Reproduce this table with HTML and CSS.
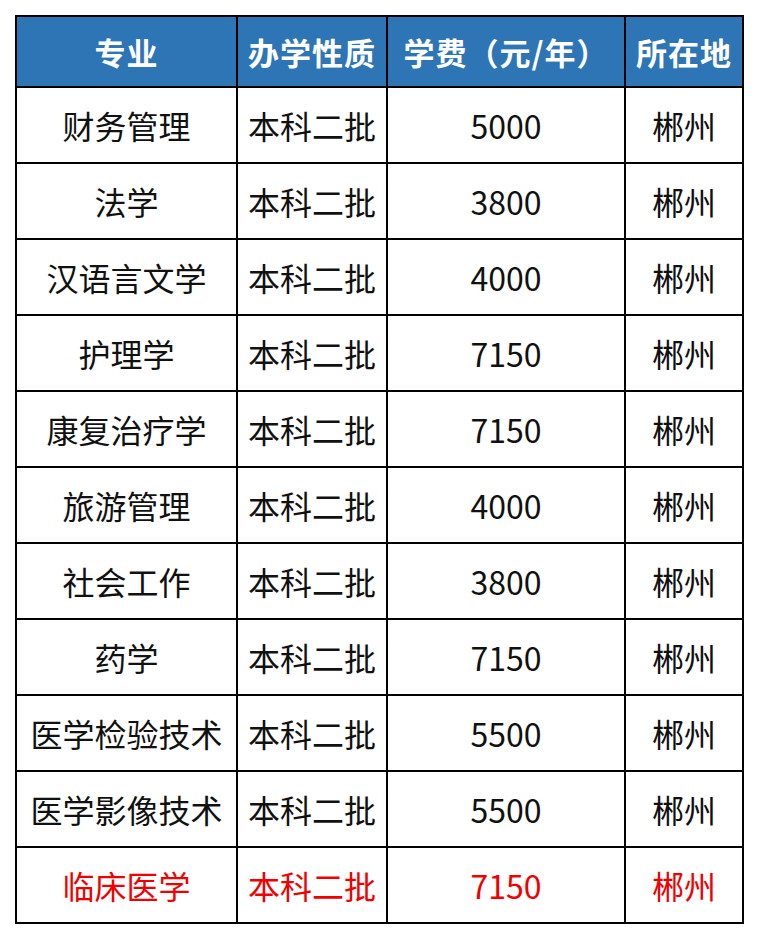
FILE: index.html
```html
<!DOCTYPE html>
<html lang="zh">
<head>
<meta charset="utf-8">
<link rel="stylesheet" href="styles.css">
</head>
<body>
<table class="fees">
  <colgroup>
    <col class="c1"><col class="c2"><col class="c3"><col class="c4">
  </colgroup>
  <thead>
    <tr><th>专业</th><th>办学性质</th><th>学费（元/年）</th><th>所在地</th></tr>
  </thead>
  <tbody>
    <tr><td>财务管理</td><td>本科二批</td><td>5000</td><td>郴州</td></tr>
    <tr><td>法学</td><td>本科二批</td><td>3800</td><td>郴州</td></tr>
    <tr><td>汉语言文学</td><td>本科二批</td><td>4000</td><td>郴州</td></tr>
    <tr><td>护理学</td><td>本科二批</td><td>7150</td><td>郴州</td></tr>
    <tr><td>康复治疗学</td><td>本科二批</td><td>7150</td><td>郴州</td></tr>
    <tr><td>旅游管理</td><td>本科二批</td><td>4000</td><td>郴州</td></tr>
    <tr><td>社会工作</td><td>本科二批</td><td>3800</td><td>郴州</td></tr>
    <tr><td>药学</td><td>本科二批</td><td>7150</td><td>郴州</td></tr>
    <tr><td>医学检验技术</td><td>本科二批</td><td>5500</td><td>郴州</td></tr>
    <tr><td>医学影像技术</td><td>本科二批</td><td>5500</td><td>郴州</td></tr>
    <tr class="hl"><td>临床医学</td><td>本科二批</td><td>7150</td><td>郴州</td></tr>
  </tbody>
</table>
</body>
</html>
```
FILE: styles.css
```css
html, body {
  margin: 0;
  background: #fff;
}
body {
  padding: 15px 0 0 15px;
  font-family: "Noto Sans CJK SC", "Noto Sans", sans-serif;
}
.fees {
  border-collapse: collapse;
  table-layout: fixed;
  width: 727px;
}
.c1 { width: 221px; }
.c2 { width: 150px; }
.c3 { width: 238px; }
.c4 { width: 118px; }
.fees th, .fees td {
  border: 2px solid #000;
  padding: 0;
  text-align: center;
  vertical-align: middle;
  white-space: nowrap;
  line-height: 1.2;
}
.fees th {
  background: #2e75b6;
  color: #fff;
  font-weight: 700;
  font-size: 31px;
  letter-spacing: 1px;
  height: 69px;
}
.fees td {
  color: #111;
  font-size: 32px;
  font-weight: 400;
  height: 74px;
}
.fees tr.hl td {
  color: #f00000;
}
```
